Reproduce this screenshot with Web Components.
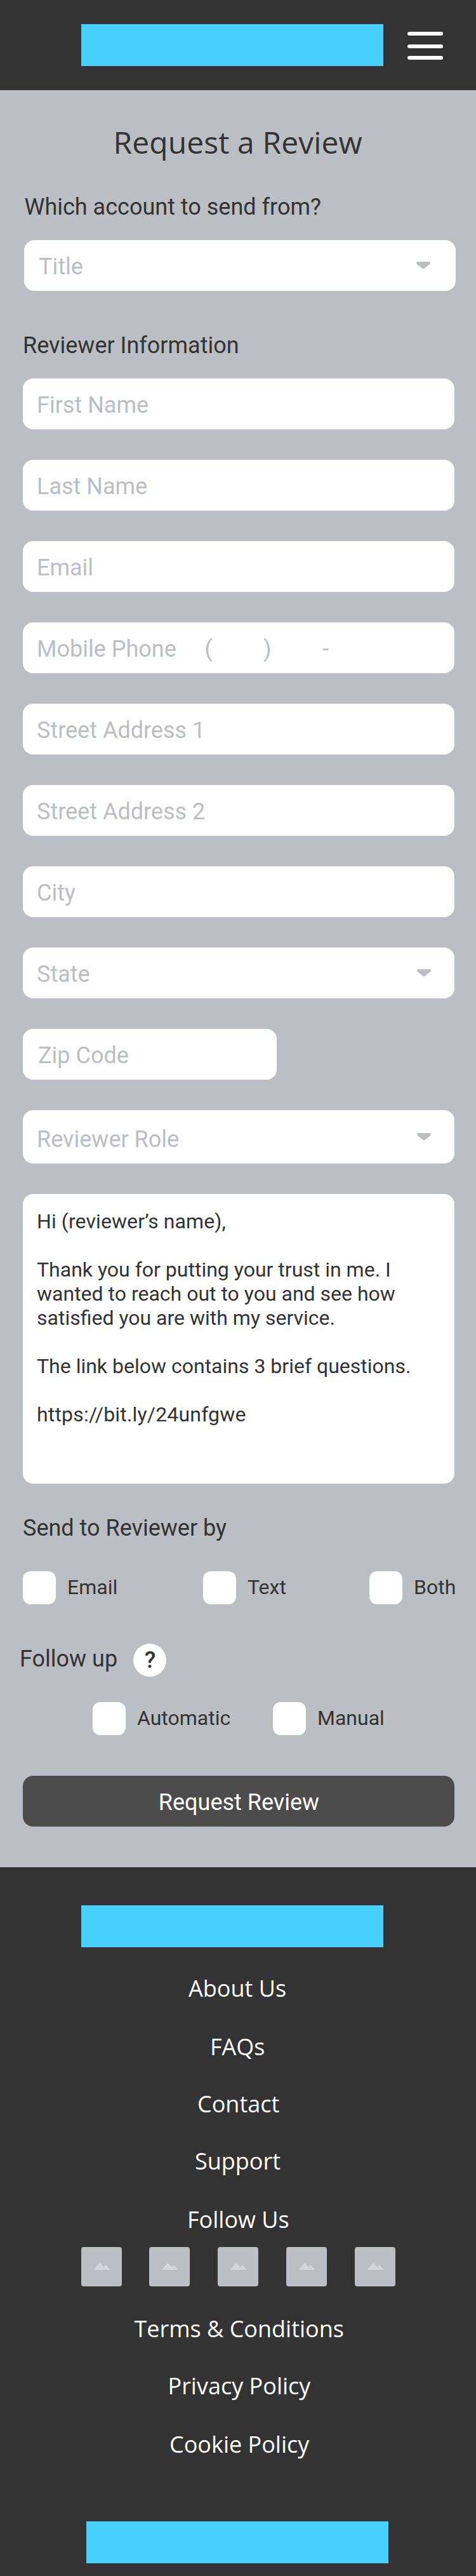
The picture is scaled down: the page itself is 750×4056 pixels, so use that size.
<!DOCTYPE html>
<html lang="en">
<head>
<meta charset="utf-8">
<title>Request a Review</title>
<style>
  body { margin: 0; background: #bbbec3; }
</style>
</head>
<body>
<review-page></review-page>
<script>
const define = (name, html) => {
  const template = document.createElement('template');
  template.innerHTML = html;
  customElements.define(name, class extends HTMLElement {
    constructor() {
      super();
      this.attachShadow({ mode: 'open' }).append(template.content.cloneNode(true));
    }
  });
};

define('brand-block', `
<style>:host { display: block; flex: none; width: 476px; height: 66px; background: #48d0fc; }</style>`);

define('menu-button', `
<style>
  :host { display: flex; flex-direction: column; width: 56px; height: 44px; }
  i { height: 6px; border-radius: 3px; background: #fff; }
  i + i { margin-top: 14px; }
  i + i + i { margin-top: 12px; }
</style><i></i><i></i><i></i>`);

define('site-header', `
<style>
  :host { display: flex; box-sizing: border-box; height: 142px; padding: 38px 52px 0 128px; background: #333; }
  menu-button { margin: 12px 0 0 38px; }
</style>
<brand-block></brand-block><menu-button></menu-button>`);

define('section-label', `
<style>:host { display: block; font: 36px/42px Roboto, sans-serif; color: #333; white-space: nowrap; }</style>
<slot></slot>`);

define('form-field', `
<style>
  :host { display: flex; box-sizing: border-box; height: 80px; padding: 21px 37px 0 22px; border-radius: 16px;
    background: #fff; font: 36px/42px Roboto, sans-serif; color: #bbbec3; white-space: pre; }
  svg { display: none; margin: var(--caret-top, 13px) 0 0 auto; }
  :host([select]) svg { display: block; }
</style>
<span><slot></slot></span>
<svg width="22" height="12" viewBox="0 0 22 12"><path d="M2 0H20Q22 0 22 2Q22 3 21.3 3.8L13 10.6Q11 12.2 9 10.6L.7 3.8Q0 3 0 2Q0 0 2 0Z" fill="#bbbec3"/></svg>`);

define('message-box', `
<style>
  :host { display: block; box-sizing: border-box; height: 456px; padding: 24px 21px 0 22px; border-radius: 16px;
    background: #fff; font: 32px/38px Roboto, sans-serif; color: #333; }
  ::slotted(p) { margin: 0 0 38px; }
  ::slotted(.greeting) { letter-spacing: .1px; }
  ::slotted(.link) { letter-spacing: .18px; }
</style><slot></slot>`);

define('check-option', `
<style>
  :host { display: flex; flex: none; gap: 18px; height: 52px; font: 32px/38px Roboto, sans-serif; color: #333; white-space: nowrap; }
  i { flex: none; width: 52px; height: 52px; border-radius: 12px; background: #fff; }
  span { margin-top: 6px; }
</style><i></i><span><slot></slot></span>`);

define('help-badge', `
<style>
  :host { display: block; box-sizing: border-box; width: 52px; height: 52px; padding: 5px 0 0 1px; border-radius: 50%;
    background: #fff; font: 500 36px/42px Roboto, sans-serif; color: #333; text-align: center; }
</style><slot></slot>`);

define('submit-button', `
<style>
  :host { display: block; box-sizing: border-box; height: 80px; padding: 21px 0 0 1px; border-radius: 16px;
    background: #4c4c4c; font: 36px/42px Roboto, sans-serif; color: #fff; text-align: center; }
</style><slot></slot>`);

define('review-form', `
<style>
  :host { display: block; box-sizing: border-box; height: 2798px; padding: 49px 34px 0 36px; background: #bbbec3; }
  h1 { margin: 0 0 49px 142.5px; font: 48px/65px "Open Sans", "Noto Sans", sans-serif; letter-spacing: .1px; color: #333; white-space: nowrap; }
  .account { margin: 0 -2px 65px 2px; }
  .account form-field { margin-top: 31px; padding-left: 23px; padding-right: 40px; }
  .account section-label { padding-left: .5px; }
  .fields { display: grid; gap: 48px; margin-top: 31px; }
  .zip { width: 400px; padding-left: 24px; }
  .role { height: 84px; padding-top: 25px; --caret-top: 11px; }
  .send { margin-top: 49px; }
  .row { display: flex; margin-top: 47px; }
  .follow { display: flex; margin: 62px 0 0 -5px; }
  .follow section-label { width: 179px; padding-top: 3px; }
  .follow + .row { margin: 40px 0 0 110px; }
  .row check-option:nth-child(1) { width: 284px; }
  .row check-option:nth-child(2) { width: 262px; }
  submit-button { margin-top: 64px; }
</style>
<h1>Request a Review</h1>
<div class="account">
  <section-label>Which account to send from?</section-label>
  <form-field select>Title</form-field>
</div>
<section-label>Reviewer Information</section-label>
<div class="fields">
  <form-field>First Name</form-field>
  <form-field>Last Name</form-field>
  <form-field>Email</form-field>
  <form-field>Mobile Phone     (         )         -</form-field>
  <form-field>Street Address 1</form-field>
  <form-field>Street Address 2</form-field>
  <form-field>City</form-field>
  <form-field select>State</form-field>
  <form-field class="zip">Zip Code</form-field>
  <form-field class="role" select>Reviewer Role</form-field>
  <message-box>
    <p class="greeting">Hi (reviewer’s name),</p>
    <p>Thank you for putting your trust in me. I<br>wanted to reach out to you and see how<br>satisfied you are with my service.</p>
    <p>The link below contains 3 brief questions.</p>
    <p class="link">https://bit.ly/24unfgwe</p>
  </message-box>
</div>
<section-label class="send">Send to Reviewer by</section-label>
<div class="row">
  <check-option>Email</check-option><check-option>Text</check-option><check-option>Both</check-option>
</div>
<div class="follow"><section-label>Follow up</section-label><help-badge>?</help-badge></div>
<div class="row"><check-option>Automatic</check-option><check-option>Manual</check-option></div>
<submit-button>Request Review</submit-button>`);

define('social-tile', `
<style>
  :host { display: block; width: 64px; height: 62px; border-radius: 4px; background: #bbbec3; }
  svg { display: block; }
</style>
<svg width="64" height="62" viewBox="0 0 64 62"><path d="M21 34.2L28.2 25.9Q29.2 24.8 30.2 25.9L35.5 31.4L37.8 28.8Q38.6 28 39.4 28.8L44.3 34.2Q45.4 36 43.8 36H21.5Q19.8 36 21 34.2Z" fill="#d3d6db"/></svg>`);

define('site-footer', `
<style>
  :host { display: block; box-sizing: border-box; height: 1116px; padding-top: 60px; background: #333;
    font: 36px/49px "Open Sans", "Noto Sans", sans-serif; color: #fff; white-space: nowrap; }
  .top { margin: 0 0 40px 128px; }
  .end { margin: 97px 0 0 136px; }
  a { display: block; margin-bottom: 41px; }
  .social { display: flex; gap: 43.8px; margin: 0 0 42px 127.5px; }
</style>
<brand-block class="top"></brand-block>
<a style="padding-left:297px;margin-bottom:43px">About Us</a>
<a style="padding-left:331px">FAQs</a>
<a style="padding-left:311px">Contact</a>
<a style="padding-left:307px;margin-bottom:43px">Support</a>
<a style="padding-left:295px;margin-bottom:19px">Follow Us</a>
<div class="social"><social-tile></social-tile><social-tile></social-tile><social-tile></social-tile><social-tile></social-tile><social-tile></social-tile></div>
<a style="padding-left:211.5px">Terms &amp; Conditions</a>
<a style="padding-left:264.5px;margin-bottom:43px">Privacy Policy</a>
<a style="padding-left:267px;margin-bottom:0">Cookie Policy</a>
<brand-block class="end"></brand-block>`);

define('review-page', `
<style>:host { display: block; width: 750px; }</style>
<site-header></site-header><review-form></review-form><site-footer></site-footer>`);
</script>
</body>
</html>
